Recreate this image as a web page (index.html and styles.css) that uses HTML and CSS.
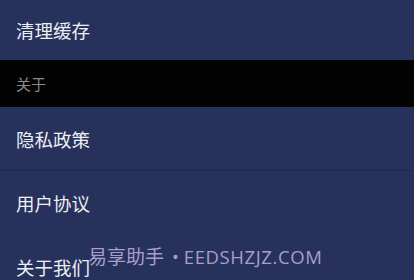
FILE: index.html
```html
<!DOCTYPE html>
<html lang="zh">
<head>
<meta charset="utf-8">
<link rel="stylesheet" href="styles.css">
</head>
<body>
<div class="page">
  <div class="row first">清理缓存</div>
  <div class="section">关于</div>
  <div class="row bordered">隐私政策</div>
  <div class="row">用户协议</div>
  <div class="row">关于我们</div>
  <div class="watermark"><span class="wm-cjk">易享助手</span><span class="wm-dot">•</span><span class="wm-latin">EEDSHZJZ.COM</span></div>
</div>
</body>
</html>
```
FILE: styles.css
```css
html, body {
  margin: 0;
  padding: 0;
  background: #26315c;
}
.page {
  position: relative;
  width: 414px;
  height: 280px;
  overflow: hidden;
  background: #26315c;
  font-family: "Noto Sans CJK SC", "Noto Sans", sans-serif;
}
.row {
  height: 64px;
  display: flex;
  align-items: center;
  padding-left: 16px;
  color: #eeeff3;
  font-size: 18.5px;
  box-sizing: border-box;
}
.row.first {
  height: 60px;
  padding-bottom: 1px;
}
.row.bordered {
  border-bottom: 1px solid #1f2850;
}
.section {
  height: 47px;
  background: #030303;
  display: flex;
  align-items: center;
  padding-left: 16px;
  color: #8b8b8b;
  font-size: 15px;
}
.watermark {
  position: absolute;
  left: 88px;
  top: 242px;
  color: #a89ecb;
  white-space: nowrap;
  display: flex;
  align-items: baseline;
}
.wm-cjk {
  font-family: "Noto Sans CJK SC", sans-serif;
  font-size: 19px;
}
.wm-dot {
  font-family: "Open Sans", sans-serif;
  font-size: 18px;
  margin: 0 5px 0 8px;
}
.wm-latin {
  font-family: "Open Sans", "Noto Sans", sans-serif;
  font-size: 18.5px;
  letter-spacing: 0.6px;
}
```
